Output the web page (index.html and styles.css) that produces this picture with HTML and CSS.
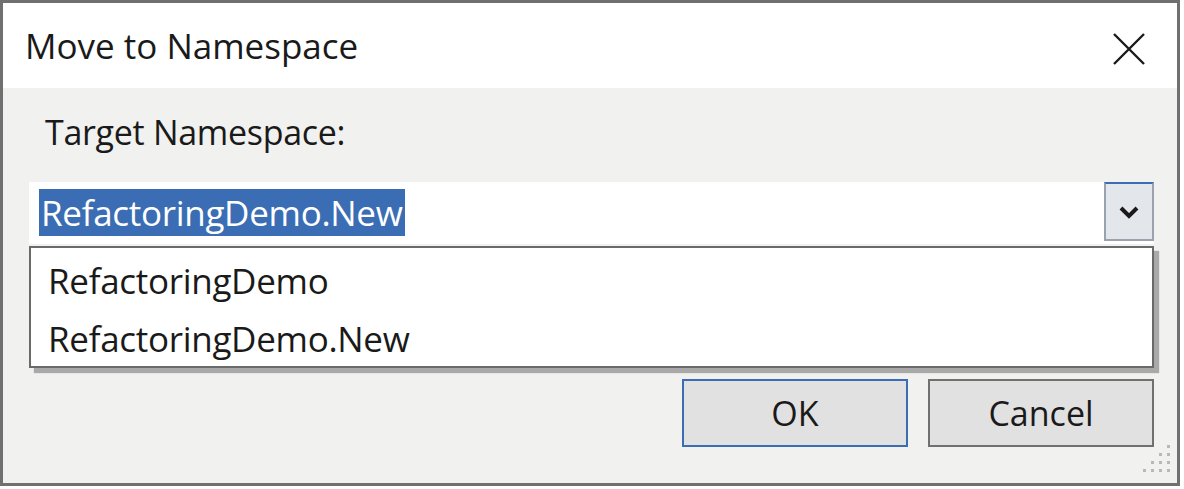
FILE: index.html
```html
<!DOCTYPE html>
<html>
<head>
<meta charset="utf-8">
<link rel="stylesheet" href="styles.css">
</head>
<body>
<div class="window">
  <div class="titlebar">
    <span class="title">Move to Namespace</span>
    <span class="close">
      <svg width="32" height="32" viewBox="0 0 32 32"><path d="M1 1 L31 31 M31 1 L1 31" stroke="#1a1a1a" stroke-width="2.4" fill="none"/></svg>
    </span>
  </div>
  <div class="content">
    <div class="label">Target Namespace:</div>
    <div class="combo">
      <div class="combo-field"><span class="selected">RefactoringDemo.New</span></div>
      <div class="combo-btn">
        <svg class="chev" width="20" height="14" viewBox="0 0 20 14"><path d="M2 3 L10 11 L18 3" stroke="#1a1a1a" stroke-width="4" fill="none"/></svg>
      </div>
      <ul class="list">
        <li>RefactoringDemo</li>
        <li>RefactoringDemo.New</li>
      </ul>
    </div>
    <div class="buttons">
      <button class="btn btn-default">OK</button>
      <button class="btn">Cancel</button>
    </div>
  </div>
  <svg class="grip" width="36" height="36" viewBox="0 0 36 36">
    <g fill="#b8b8b8">
      <rect x="30" y="2" width="3" height="3"/>
      <rect x="22" y="10" width="3" height="3"/><rect x="30" y="10" width="3" height="3"/>
      <rect x="14" y="18" width="3" height="3"/><rect x="22" y="18" width="3" height="3"/><rect x="30" y="18" width="3" height="3"/>
      <rect x="6" y="26" width="3" height="3"/><rect x="14" y="26" width="3" height="3"/><rect x="22" y="26" width="3" height="3"/><rect x="30" y="26" width="3" height="3"/>
    </g>
  </svg>
</div>
</body>
</html>
```
FILE: styles.css
```css
* { box-sizing: border-box; }
html, body { margin: 0; padding: 0; background: #ffffff; }
body { font-family: "Open Sans", "Noto Sans", sans-serif; color: #1a1a1a; }

.window {
  position: relative;
  width: 1180px;
  height: 486px;
  border: 3px solid #707070;
  background: #f1f1ef;
  display: flex;
  flex-direction: column;
}

.titlebar {
  height: 85px;
  background: #ffffff;
  display: flex;
  align-items: center;
  justify-content: space-between;
  padding: 0 32px 0 22px;
  flex: none;
}
.title { font-size: 35px; letter-spacing: 0; }
.close { display: flex; margin-top: 6px; }

.content {
  flex: 1;
  padding: 16px 23px 0 26px;
  display: flex;
  flex-direction: column;
}
.label { font-size: 34px; padding-left: 16px; letter-spacing: -0.3px; height: 78px; line-height: 56px; }

.combo {
  position: relative;
  height: 62px;
  display: flex;
  background: #ffffff;
}
.combo-field {
  flex: 1;
  padding: 7px 0 0 10px;
}
.selected {
  display: inline-block;
  background: #3a6db3;
  color: #ffffff;
  font-size: 35px;
  line-height: 47px;
  letter-spacing: -0.3px;
  padding: 0 2px;
}
.combo-btn {
  width: 50px;
  height: 59px;
  background: #e3e7ec;
  border: 2px solid #9aa3ad;
  border-top-color: #3a6db3;
  display: flex;
  align-items: center;
  justify-content: center;
}
.chev { width: 20px; height: 14px; flex: none; }

.list {
  position: absolute;
  left: 0;
  right: 0;
  top: 64px;
  height: 122px;
  margin: 0;
  padding: 4px 0 0 0;
  list-style: none;
  background: #ffffff;
  border: 2px solid #6a6a6a;
  box-shadow: 5px 5px 1px #a9a9a9;
  z-index: 2;
}
.list li {
  font-size: 35px;
  line-height: 58px;
  padding-left: 17px;
  letter-spacing: -0.3px;
}

.buttons {
  margin-top: auto;
  margin-bottom: 36px;
  display: flex;
  justify-content: flex-end;
  gap: 20px;
}
.btn {
  width: 226px;
  height: 68px;
  background: #e1e1e1;
  border: 2px solid #707070;
  font-family: "Open Sans", "Noto Sans", sans-serif;
  font-size: 34px;
  color: #1a1a1a;
  padding: 0;
  letter-spacing: 0;
}
.btn-default { border-color: #3a6db3; }

.grip { position: absolute; right: 4px; bottom: 4px; }
```
